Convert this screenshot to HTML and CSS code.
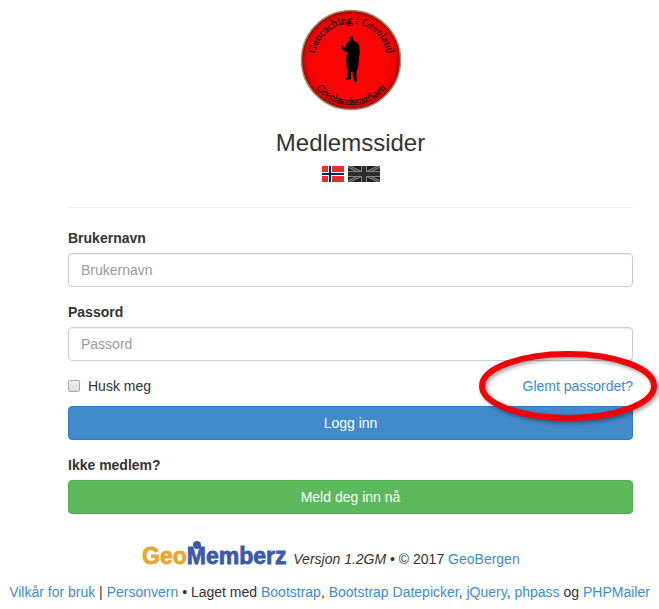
FILE: index.html
```html
<!DOCTYPE html>
<html lang="no">
<head>
    <meta charset="UTF-8">
    <meta name="viewport" content="width=device-width, initial-scale=1.0">
    <title>Medlemssider</title>
    <link rel="stylesheet" href="styles.css">
</head>
<body>
    <div class="container">
        <div class="header">
            <svg class="logo" viewBox="0 0 102 102" role="img" aria-label="Geocaching i Grenland">
                <defs>
                    <radialGradient id="badge">
                        <stop offset="0.78" stop-color="#fc0404"/>
                        <stop offset="0.92" stop-color="#e60303"/>
                        <stop offset="1" stop-color="#8a0a05"/>
                    </radialGradient>
                    <path id="top" d="M14.5 51 A36.5 36.5 0 0 1 87.5 51"/>
                    <path id="bottom" d="M6 51 A45 45 0 0 0 96 51"/>
                </defs>
                <circle cx="51" cy="51" r="49.5" fill="url(#badge)" stroke="#a58c6c" stroke-width="1.5"/>
                <text class="logo-text" text-anchor="middle"><textPath href="#top" startOffset="50%">Geocaching i Grenland</textPath></text>
                <text class="logo-text" text-anchor="middle"><textPath href="#bottom" startOffset="50%">Grenlandsmafiaen</textPath></text>
                <!-- figure with coat -->
                <path d="M49.5 28 Q51 26.500 53 28 L53.500 31.500 Q57.500 33 59 36 Q60.500 43 59 49 L58 60 L56.500 61 L56.500 69 L57.500 72.500 L54.500 73 L52.500 63 L51 63 L51 70 L46 71 L45.500 69 L48 68 L47 60 L46 51 L47 43 L42.500 41 L40.500 37 L42.500 36.500 L44.500 39 L47 33.500 L50 31.500 Z" fill="#000"/>
            </svg>
            <h3>Medlemssider</h3>
            <div class="flags">
                <a href="#" aria-label="Norsk">
                    <svg width="22" height="16" viewBox="0 0 22 16">
                        <path fill="#ef2b2d" d="M0 0h22v16H0z"/>
                        <path fill="#fff" d="M6 0h4v16H6zM0 6h22v4H0z"/>
                        <path fill="#002868" d="M7 0h2v16H7zM0 7h22v2H0z"/>
                    </svg>
                </a>
                <a href="#" aria-label="English">
                    <svg width="32" height="16" viewBox="0 0 32 16">
                        <path fill="#222" d="M0 0h32v16H0z"/>
                        <path stroke="#858585" stroke-width="3" d="M0 0l32 16M32 0L0 16"/>
                        <path stroke="#333" stroke-width="1" d="M0 0l32 16M32 0L0 16"/>
                        <path fill="#858585" d="M13 0h6v16h-6zM0 5h32v6H0z"/>
                        <path fill="#2c2c2c" d="M14 0h4v16h-4zM0 6h32v4H0z"/>
                    </svg>
                </a>
            </div>
        </div>
        <hr>
        <form>
            <div class="form-group">
                <label for="username">Brukernavn</label>
                <input class="form-control" type="text" id="username" placeholder="Brukernavn">
            </div>
            <div class="form-group">
                <label for="password">Passord</label>
                <input class="form-control" type="password" id="password" placeholder="Passord">
            </div>
            <div class="options">
                <label class="remember" for="remember"><input type="checkbox" id="remember">Husk meg</label>
                <a href="#">Glemt passordet?</a>
                <svg class="marker" width="184" height="84" viewBox="0 0 184 84" aria-hidden="true">
                    <ellipse cx="93" cy="40" rx="86" ry="32"/>
                </svg>
            </div>
            <button class="btn btn-primary" type="submit">Logg inn</button>
            <div class="signup">
                <label for="signup">Ikke medlem?</label>
                <button class="btn btn-success" type="button" id="signup">Meld deg inn nå</button>
            </div>
        </form>
    </div>

    <div class="footer">
        <div class="footer-row">
            <svg class="brand" width="148" height="28" viewBox="0 0 148 28">
                <text class="brand-text" x="1" y="23"><tspan class="brand-geo">Geo</tspan><tspan class="brand-memberz">Memberz</tspan></text>
                <circle cx="56" cy="4" r="4" fill="#3c5aa6"/>
            </svg>
            <span><em>Versjon 1.2GM</em> • © 2017 <a href="#">GeoBergen</a></span>
        </div>
        <p><a href="#">Vilkår for bruk</a> | <a href="#">Personvern</a> • Laget med <a href="#">Bootstrap</a>, <a href="#">Bootstrap Datepicker</a>, <a href="#">jQuery</a>, <a href="#">phpass</a> og <a href="#">PHPMailer</a></p>
    </div>
</body>
</html>
```
FILE: styles.css
```css
* {
    box-sizing: border-box;
}
body {
    margin: 0;
    font-family: "Liberation Sans", Arial, sans-serif;
    font-size: 14px;
    line-height: 20px;
    color: #333;
    background-color: #fff;
}
a {
    color: #428bca;
    text-decoration: none;
}
.container {
    padding: 9px 26px 0 68px;
}
.header {
    display: flex;
    flex-direction: column;
    align-items: center;
}
.logo {
    width: 102px;
    height: 102px;
}
.logo-text {
    font-family: "Liberation Serif", serif;
    font-size: 11px;
    stroke: #000;
    stroke-width: 0.2;
}
h3 {
    margin: 19px 0 10px;
    font-size: 24px;
    font-weight: 500;
    line-height: 26px;
}
.flags {
    display: flex;
    gap: 4px;
}
.flags svg {
    display: block;
}
hr {
    margin: 25px 0 20px;
    border: 0;
    border-top: 1px solid #eee;
}
label {
    display: block;
    margin-bottom: 5px;
    font-weight: bold;
}
.form-group {
    margin-bottom: 15px;
}
.form-control {
    display: block;
    width: 100%;
    height: 34px;
    padding: 6px 12px;
    font-family: inherit;
    font-size: 14px;
    color: #555;
    background-color: #fff;
    border: 1px solid #ccc;
    border-radius: 4px;
    box-shadow: inset 0 1px 1px rgba(0, 0, 0, 0.075);
}
.form-control::placeholder {
    color: #999;
}
.options {
    position: relative;
    display: flex;
    justify-content: space-between;
    margin-bottom: 10px;
}
.remember {
    display: flex;
    align-items: center;
    gap: 8px;
    margin: 0;
    font-weight: normal;
}
.remember input {
    appearance: none;
    width: 12px;
    height: 12px;
    margin: 0;
    background: linear-gradient(#eee, #ddd);
    border: 1px solid #aaa;
    border-radius: 2px;
}
.remember input:checked {
    background: #428bca;
}
/* red ring round the password link */
.marker {
    position: absolute;
    top: -30px;
    right: -26px;
    pointer-events: none;
    filter: drop-shadow(2px 2px 2px rgba(0, 0, 0, 0.4));
}
.marker ellipse {
    fill: none;
    stroke: #f00008;
    stroke-width: 6px;
}
.btn {
    display: block;
    width: 100%;
    height: 34px;
    padding: 6px 12px;
    font-family: inherit;
    font-size: 14px;
    color: #fff;
    border: 1px solid transparent;
    border-radius: 4px;
    cursor: pointer;
}
.btn-primary {
    background-color: #428bca;
    border-color: #357ebd;
}
.btn-success {
    background-color: #5cb85c;
    border-color: #4cae4c;
}
.signup {
    margin-top: 15px;
}
.footer {
    margin-top: 27px;
    text-align: center;
}
.footer-row {
    display: flex;
    justify-content: center;
    align-items: flex-end;
    gap: 4px;
    padding-left: 2px;
}
.brand-text {
    font-size: 23px;
    font-weight: bold;
    stroke-width: 0.8;
}
.brand-geo {
    fill: #e8a82f;
    stroke: #e8a82f;
}
.brand-memberz {
    fill: #3c5aa6;
    stroke: #3c5aa6;
}
.footer p {
    margin: 13px 0 0;
}
```
